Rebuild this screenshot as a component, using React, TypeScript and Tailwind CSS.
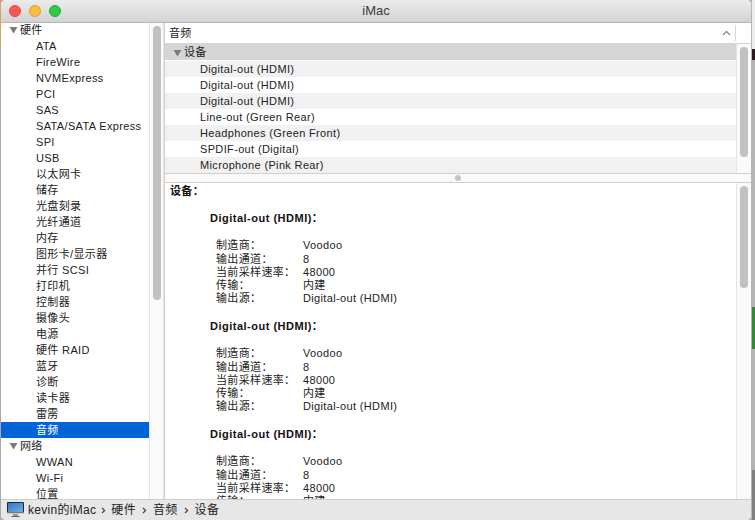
const font = "[font-family:'Liberation_Sans','Noto_Sans_CJK_SC',sans-serif]";

type SidebarItem = { label: string; group?: boolean; selected?: boolean };

const sidebarItems: SidebarItem[] = [
  { label: "硬件", group: true },
  { label: "ATA" },
  { label: "FireWire" },
  { label: "NVMExpress" },
  { label: "PCI" },
  { label: "SAS" },
  { label: "SATA/SATA Express" },
  { label: "SPI" },
  { label: "USB" },
  { label: "以太网卡" },
  { label: "储存" },
  { label: "光盘刻录" },
  { label: "光纤通道" },
  { label: "内存" },
  { label: "图形卡/显示器" },
  { label: "并行 SCSI" },
  { label: "打印机" },
  { label: "控制器" },
  { label: "摄像头" },
  { label: "电源" },
  { label: "硬件 RAID" },
  { label: "蓝牙" },
  { label: "诊断" },
  { label: "读卡器" },
  { label: "雷雳" },
  { label: "音频", selected: true },
  { label: "网络", group: true },
  { label: "WWAN" },
  { label: "Wi-Fi" },
  { label: "位置" },
];

const devices = [
  "Digital-out (HDMI)",
  "Digital-out (HDMI)",
  "Digital-out (HDMI)",
  "Line-out (Green Rear)",
  "Headphones (Green Front)",
  "SPDIF-out (Digital)",
  "Microphone (Pink Rear)",
];

function Triangle() {
  return (
    <svg width="9" height="8" viewBox="0 0 9 8" className="shrink-0">
      <path d="M0.5 1H8.5L4.5 7.5Z" fill="#7a7a7a" />
    </svg>
  );
}

function Thumb({ className }: { className: string }) {
  return <div className={`mx-auto w-2 rounded-full bg-[#c1c1c1] ${className}`} />;
}

function TrafficLight({ color, edge }: { color: string; edge: string }) {
  return <div className={`size-3 rounded-full border ${color} ${edge}`} />;
}

function Chevron({ className }: { className: string }) {
  return (
    <svg width="5" height="7" viewBox="0 0 5 7" className={`shrink-0 ${className}`}>
      <path d="M1 1L3.6 3.5L1 6" fill="none" stroke="#444" strokeWidth="1.2" />
    </svg>
  );
}

function DeviceBlock({ cut }: { cut?: boolean }) {
  const rows = [
    ["制造商：", "Voodoo"],
    ["输出通道：", "8"],
    ["当前采样速率：", "48000"],
    ["传输：", "内建"],
    ["输出源：", "Digital-out (HDMI)"],
  ];
  return (
    <div className="mb-[15px]">
      <div className="pl-10 text-[11px] leading-[13px] font-bold tracking-[0.5px] text-[#111]">Digital-out (HDMI)：</div>
      <div className="mt-[14px] pl-[46px]">
        {rows.slice(0, cut ? 4 : 5).map(([k, v], i) => (
          <div key={k} className={`flex items-center text-[11px] tracking-[0.35px] text-[#222] ${i === 1 ? "h-[14px]" : "h-[13px]"}`}>
            <span className="w-[87px]">{k}</span>
            <span>{v}</span>
          </div>
        ))}
      </div>
    </div>
  );
}

export default function App() {
  return (
    <div className={`flex h-[520px] w-[755px] overflow-hidden bg-[#b0b0b0] ${font}`}>
      {/* desktop showing behind the window */}
      <div className="flex h-full w-px shrink-0 flex-col bg-[#a9a9a9]">
        <div className="h-[52px] bg-[#d9a066]" />
      </div>

      <div className="flex h-full w-[751px] shrink-0 flex-col overflow-hidden rounded-[5px] border-r border-[#b5b5b5] bg-white">
        {/* title bar */}
        <div className="relative flex h-[23px] shrink-0 items-center justify-center border-b border-[#b4b4b4] bg-gradient-to-b from-[#ececec] to-[#d3d3d3]">
          <div className="absolute left-[8px] top-[5px] flex gap-2">
            <TrafficLight color="bg-[#fc5753]" edge="border-[#df4744]" />
            <TrafficLight color="bg-[#fdbc40]" edge="border-[#de9f34]" />
            <TrafficLight color="bg-[#33c748]" edge="border-[#27aa35]" />
          </div>
          <span className="text-[13px] text-[#3c3c3c]">iMac</span>
        </div>

        <div className="flex min-h-0 flex-1">
          {/* sidebar */}
          <div className="h-full w-[148px] shrink-0 overflow-hidden bg-white">
            <div className="-mt-px">
              {sidebarItems.map((item) =>
                item.group ? (
                  <div key={item.label} className="flex h-4 items-center gap-[2px] pl-[8px] text-[11px] tracking-[0.35px] text-[#222]">
                    <Triangle />
                    {item.label}
                  </div>
                ) : (
                  <div
                    key={item.label}
                    className={`flex h-4 items-center pl-[35px] text-[11px] tracking-[0.35px] ${item.selected ? "bg-[#0063d8] text-white" : "text-[#222]"}`}
                  >
                    {item.label}
                  </div>
                ),
              )}
            </div>
          </div>
          <div className="h-full w-[15px] shrink-0 border-x border-[#e4e4e4] bg-[#fafafa] pt-[3px]">
            <Thumb className="h-[274px]" />
          </div>

          {/* right pane */}
          <div className="flex min-w-0 flex-1 flex-col border-l border-[#d0d0d0]">
            <div className="flex h-[21px] shrink-0 items-center border-b border-[#d4d4d4] pl-[4px] text-[11px] tracking-[0.35px] text-[#222]">
              <span className="flex-1">音频</span>
              <svg width="9" height="6" viewBox="0 0 9 6" className="mr-[4px]">
                <path d="M1 5L4.5 1.5L8 5" fill="none" stroke="#8f8f8f" strokeWidth="1.4" />
              </svg>
              <div className="mr-[15px] h-[16px] w-px bg-[#d8d8d8]" />
            </div>

            <div className="flex h-[129px] shrink-0">
              <div className="min-w-0 flex-1">
                <div className="mb-px flex h-[16px] items-center gap-[2px] bg-[#d5d5d5] pl-[8px] pt-px text-[11px] tracking-[0.35px] text-[#222]">
                  <Triangle />
                  设备
                </div>
                {devices.map((d, i) => (
                  <div
                    key={i}
                    className={`flex h-4 items-center pl-[35px] text-[11px] tracking-[0.35px] text-[#222] ${i % 2 === 0 ? "bg-[#f1f1f1]" : "bg-white"}`}
                  >
                    {d}
                  </div>
                ))}
              </div>
              <div className="h-full w-[15px] shrink-0 border-l border-[#e4e4e4] bg-[#fafafa] pt-[3px]">
                <Thumb className="h-[110px]" />
              </div>
            </div>

            {/* splitter */}
            <div className="flex h-[10px] shrink-0 items-center justify-center border-y border-[#cfcfcf] bg-[#fafafa]">
              <div className="size-[6px] rounded-full bg-[#c4c4c4]" />
            </div>

            <div className="flex min-h-0 flex-1">
              <div className="min-w-0 flex-1 overflow-hidden pl-[5px] pt-[2px]">
                <div className="mb-[14px] text-[11px] leading-[13px] font-bold tracking-[0.35px] text-[#111]">设备：</div>
                <DeviceBlock />
                <DeviceBlock />
                <DeviceBlock cut />
              </div>
              <div className="h-full w-[15px] shrink-0 border-l border-[#e4e4e4] bg-[#fafafa] pt-[3px]">
                <Thumb className="h-[102px]" />
              </div>
            </div>
          </div>
        </div>

        {/* path bar */}
        <div className="flex h-[21px] shrink-0 items-center border-t border-[#cdcdcd] bg-[#e7e7e7] pl-[6px] text-[12px] tracking-[0.3px] text-[#222]">
          <svg width="17" height="16" viewBox="0 0 17 16" className="mr-[4px] shrink-0">
            <defs>
              <linearGradient id="screen" x1="0" y1="0" x2="1" y2="1">
                <stop offset="0" stopColor="#2a78c8" />
                <stop offset="1" stopColor="#6fb0e0" />
              </linearGradient>
            </defs>
            <rect x="0" y="0" width="17" height="11.5" rx="1" fill="#26282c" />
            <rect x="1" y="1" width="15" height="9" fill="url(#screen)" />
            <rect x="0" y="10.5" width="17" height="1.5" fill="#c9c9c9" />
            <rect x="6" y="12" width="5" height="2" fill="#9a9a9a" />
            <rect x="4.5" y="14" width="8" height="1" fill="#5e5e5e" />
          </svg>
          <span>kevin的iMac</span>
          <Chevron className="mx-[5px]" />
          <span>硬件</span>
          <Chevron className="mx-[6px]" />
          <span>音频</span>
          <Chevron className="mx-[6px]" />
          <span>设备</span>
        </div>
      </div>

      <div className="flex h-full w-[3px] shrink-0 flex-col">
        <div className="h-[49px] bg-[#ececec]" />
        <div className="h-[11px] bg-[#2a1a22]" />
        <div className="h-[247px] bg-[#b4b4b4]" />
        <div className="h-[42px] bg-[#2f8a36]" />
        <div className="h-[121px] bg-[#b4b4b4]" />
        <div className="flex-1 bg-[#808080]" />
      </div>
    </div>
  );
}
